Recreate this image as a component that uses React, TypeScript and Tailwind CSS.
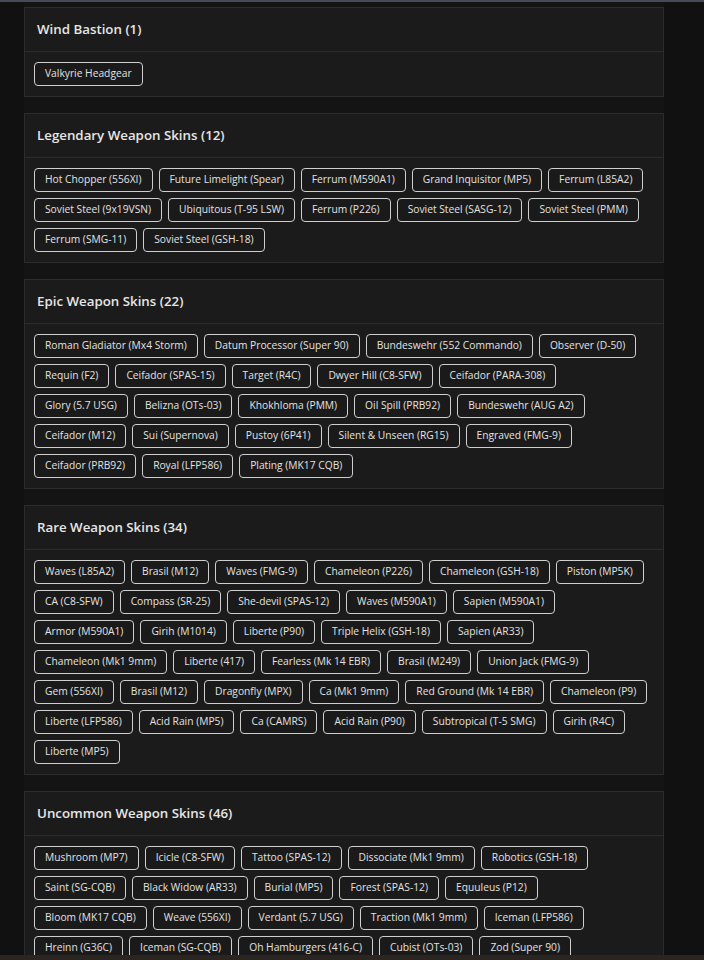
import React from "react";

type Section = { title: string; rows: string[][] };

const sections: Section[] = [
  { title: "Wind Bastion (1)", rows: [["Valkyrie Headgear"]] },
  {
    title: "Legendary Weapon Skins (12)",
    rows: [
      ["Hot Chopper (556XI)", "Future Limelight (Spear)", "Ferrum (M590A1)", "Grand Inquisitor (MP5)", "Ferrum (L85A2)"],
      ["Soviet Steel (9x19VSN)", "Ubiquitous (T-95 LSW)", "Ferrum (P226)", "Soviet Steel (SASG-12)", "Soviet Steel (PMM)"],
      ["Ferrum (SMG-11)", "Soviet Steel (GSH-18)"],
    ],
  },
  {
    title: "Epic Weapon Skins (22)",
    rows: [
      ["Roman Gladiator (Mx4 Storm)", "Datum Processor (Super 90)", "Bundeswehr (552 Commando)", "Observer (D-50)"],
      ["Requin (F2)", "Ceifador (SPAS-15)", "Target (R4C)", "Dwyer Hill (C8-SFW)", "Ceifador (PARA-308)"],
      ["Glory (5.7 USG)", "Belizna (OTs-03)", "Khokhloma (PMM)", "Oil Spill (PRB92)", "Bundeswehr (AUG A2)"],
      ["Ceifador (M12)", "Sui (Supernova)", "Pustoy (6P41)", "Silent & Unseen (RG15)", "Engraved (FMG-9)"],
      ["Ceifador (PRB92)", "Royal (LFP586)", "Plating (MK17 CQB)"],
    ],
  },
  {
    title: "Rare Weapon Skins (34)",
    rows: [
      ["Waves (L85A2)", "Brasil (M12)", "Waves (FMG-9)", "Chameleon (P226)", "Chameleon (GSH-18)", "Piston (MP5K)"],
      ["CA (C8-SFW)", "Compass (SR-25)", "She-devil (SPAS-12)", "Waves (M590A1)", "Sapien (M590A1)"],
      ["Armor (M590A1)", "Girih (M1014)", "Liberte (P90)", "Triple Helix (GSH-18)", "Sapien (AR33)"],
      ["Chameleon (Mk1 9mm)", "Liberte (417)", "Fearless (Mk 14 EBR)", "Brasil (M249)", "Union Jack (FMG-9)"],
      ["Gem (556XI)", "Brasil (M12)", "Dragonfly (MPX)", "Ca (Mk1 9mm)", "Red Ground (Mk 14 EBR)", "Chameleon (P9)"],
      ["Liberte (LFP586)", "Acid Rain (MP5)", "Ca (CAMRS)", "Acid Rain (P90)", "Subtropical (T-5 SMG)", "Girih (R4C)"],
      ["Liberte (MP5)"],
    ],
  },
  {
    title: "Uncommon Weapon Skins (46)",
    rows: [
      ["Mushroom (MP7)", "Icicle (C8-SFW)", "Tattoo (SPAS-12)", "Dissociate (Mk1 9mm)", "Robotics (GSH-18)"],
      ["Saint (SG-CQB)", "Black Widow (AR33)", "Burial (MP5)", "Forest (SPAS-12)", "Equuleus (P12)"],
      ["Bloom (MK17 CQB)", "Weave (556XI)", "Verdant (5.7 USG)", "Traction (Mk1 9mm)", "Iceman (LFP586)"],
      ["Hreinn (G36C)", "Iceman (SG-CQB)", "Oh Hamburgers (416-C)", "Cubist (OTs-03)", "Zod (Super 90)"],
      ["Stratus (AUG A2)", "Pulse (P10 RONI)", "Halo (T-95 LSW)", "Ember (ITA12L)"],
    ],
  },
];

function Pill({ label }: { label: string }) {
  return (
    <span className="h-6 flex items-center px-[10px] border border-[#cfcfcf] rounded-[4px] text-[10.25px] text-[#e2e2e2] whitespace-nowrap bg-[#1a1a1a]">
      {label}
    </span>
  );
}

function Card({ s }: { s: Section }) {
  return (
    <div className="bg-[#1b1b1b] border border-[#2c2c2c]">
      <div className="h-[44px] flex items-center px-3 border-b border-[#2c2c2c]">
        <h2 className="text-[13.3px] font-semibold text-[#e6e6e6]">{s.title}</h2>
      </div>
      <div className="px-[9px] py-[10px] flex flex-col gap-[6px]">
        {s.rows.map((row, i) => (
          <div key={i} className="flex gap-[6px]">
            {row.map((l, j) => (
              <Pill key={j} label={l} />
            ))}
          </div>
        ))}
      </div>
    </div>
  );
}

export default function App() {
  return (
    <div className="min-h-screen bg-[#111111] font-['Open_Sans',sans-serif]">
      <div className="h-[2px] bg-[#474a54]" />
      <div className="w-[640px] ml-6 pt-[5px] flex flex-col gap-4 bg-[#141414]">
        {sections.map((s, i) => (
          <Card key={i} s={s} />
        ))}
      </div>
      <div className="fixed left-0 right-0 bottom-0 h-[5px] bg-[#2a2521]" />
    </div>
  );
}
